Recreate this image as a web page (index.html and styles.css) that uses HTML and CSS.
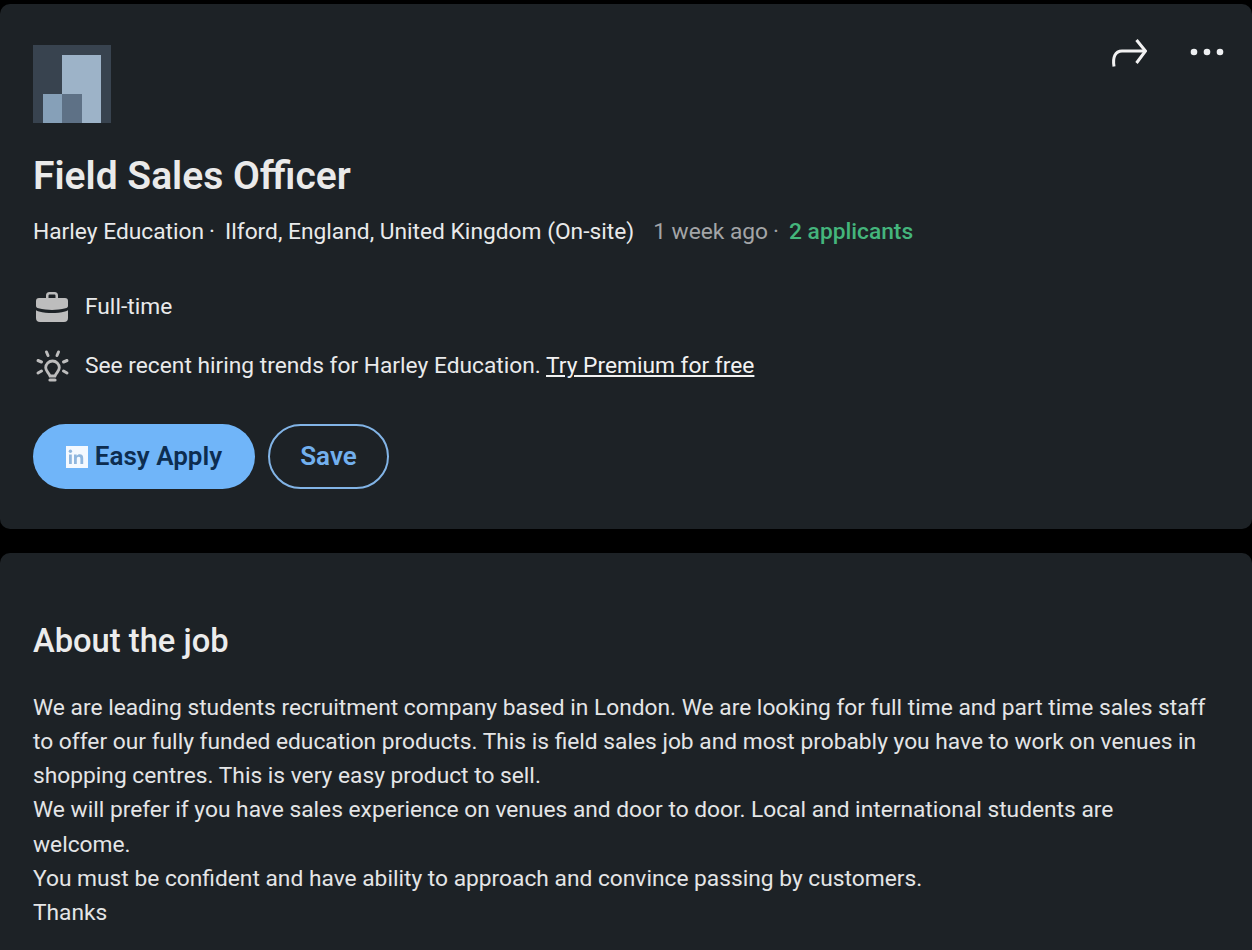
FILE: index.html
```html
<!DOCTYPE html>
<html lang="en">
<head>
<meta charset="utf-8">
<title>Field Sales Officer</title>
<link rel="stylesheet" href="styles.css">
</head>
<body>
<main class="page">
  <section class="card top-card">
    <div class="actions">
      <svg class="share" width="36" height="28" viewBox="0 0 36 28" fill="none" stroke="#f2f2f2" stroke-width="3"><path d="M3 27.500c-1.500-9 1-15.500 8-15.500h23"/><path d="M25.500 1l9 11-9 12"/></svg>
      <svg class="more" width="34" height="8" viewBox="0 0 34 8" fill="#eef0f2"><circle cx="4" cy="4" r="3.300"/><circle cx="17" cy="4" r="3.300"/><circle cx="30" cy="4" r="3.300"/></svg>
    </div>
    <svg class="logo" width="78" height="78" viewBox="0 0 78 78">
      <rect width="78" height="78" fill="#38434f"/>
      <rect x="29" y="10" width="39" height="68" fill="#9db3c8"/>
      <rect x="10" y="49" width="20" height="29" fill="#86a0b8"/>
      <rect x="29" y="49" width="20" height="29" fill="#5e7186"/>
    </svg>
    <h1 class="title">Field Sales Officer</h1>
    <p class="meta">
      <span>Harley Education</span><span class="sep">·</span><span class="loc">Ilford, England, United Kingdom (On-site)</span><span class="muted">1 week ago</span><span class="muted sep-b">·</span><span class="applicants">2 applicants</span>
    </p>
    <div class="insight first">
      <svg width="36" height="32" viewBox="0 0 36 32" fill="#bdbdbd"><path d="M12 7V4.500A3.500 3.500 0 0 1 15.500 1h5A3.500 3.500 0 0 1 24 4.500V7h-2.500V4.800c0-.8-.5-1.300-1.300-1.300h-4.400c-.8 0-1.300.5-1.300 1.300V7z"/><path d="M2 10a3 3 0 0 1 3-3h26a3 3 0 0 1 3 3v5c0 1.200-1 2-2.500 2.300C27 18.500 22 19 18 19s-9-.5-13.500-1.700C3 17 2 16.200 2 15z"/><path d="M2 19.300c1 .6 1.800 1 3 1.200C9 21.500 14 22 18 22s9-.5 13-1.500c1.200-.2 2-.6 3-1.200V27a4 4 0 0 1-4 4H6a4 4 0 0 1-4-4z"/></svg>
      <span>Full-time</span>
    </div>
    <div class="insight">
      <svg width="36" height="34" viewBox="0 0 36 34" fill="none" stroke="#bdbdbd" stroke-width="2.800" stroke-linecap="round"><path d="M18.500 12a6.800 6.800 0 0 0-6.800 6.800c0 3 2.800 4.700 4.300 8.200h5c1.500-3.500 4.300-5.200 4.300-8.200a6.800 6.800 0 0 0-6.800-6.800z"/><path d="M16 31h5" stroke-width="3.200"/><path d="M12.500 3l1.500 3.500M24.500 3L23 6.500M4 11.500l3.500 1.500M33 11.500L29.500 13M4 24l3.500-2M33 24l-3.500-2" stroke-width="3"/></svg>
      <span>See recent hiring trends for Harley Education. <a href="#" class="link">Try Premium for free</a></span>
    </div>
    <div class="buttons">
      <button class="btn primary"><svg class="in" width="22" height="22" viewBox="0 0 22 22"><rect width="22" height="22" fill="#f4f9ff"/><rect x="3" y="8.500" width="2.800" height="9.500" fill="#8fb6de"/><circle cx="4.400" cy="5.300" r="1.700" fill="#8fb6de"/><path d="M8 8.500h2.700v1.400c.6-1 1.700-1.700 3-1.700 2.500 0 3.500 1.500 3.500 4V18h-2.800v-5.200c0-1.300-.5-2.100-1.700-2.100s-1.900.9-1.900 2.200V18H8z" fill="#8fb6de"/></svg>Easy Apply</button>
      <button class="btn secondary">Save</button>
    </div>
  </section>
  <section class="card about">
    <h2 class="heading">About the job</h2>
    <div class="body-text">
      <p>We are leading students recruitment company based in London. We are looking for full time and part time sales staff to offer our fully funded education products. This is field sales job and most probably you have to work on venues in shopping centres. This is very easy product to sell.</p>
      <p>We will prefer if you have sales experience on venues and door to door. Local and international students are welcome.</p>
      <p>You must be confident and have ability to approach and convince passing by customers.</p>
      <p>Thanks</p>
    </div>
  </section>
</main>
</body>
</html>
```
FILE: styles.css
```css
* { box-sizing: border-box; }
html, body { margin: 0; padding: 0; height: 100%; overflow: hidden; background: #000; }
body { font-family: Roboto, "Liberation Sans", sans-serif; color: #e9eaeb; }
.page { display: flex; flex-direction: column; gap: 24px; padding-top: 4px; }
.card { background: #1d2226; border-radius: 10px; padding: 0 44px 0 33px; position: relative; }
.top-card { height: 525px; padding-top: 41px; }
.about { height: 420px; padding-top: 68px; }
.actions { position: absolute; top: 35px; right: 28px; display: flex; align-items: center; gap: 43px; }
.share { display: block; }
.more { display: block; margin-top: -2px; }
.logo { display: block; }
.title { margin: 29px 0 0; font-size: 39px; line-height: 48px; font-weight: 600; color: #eaeaea; }
.meta { margin: 15px 0 0; font-size: 22.750px; line-height: 34px; display: flex; white-space: nowrap; }
.sep { margin: 0 10px 0 5px; }
.muted { color: #a3a5a7; }
.sep-b { margin: 0 10px 0 5px; }
.loc { margin-right: 19px; }
.applicants { color: #44b57c; font-weight: 500; }
.insight { display: flex; align-items: center; gap: 15px; margin-top: 25px; margin-left: 1px; font-size: 22.750px; line-height: 34px; height: 34px; }
.insight.first { margin-top: 41px; }
.link { color: #f2f2f2; text-decoration: underline; }
.buttons { display: flex; gap: 13px; margin-top: 41px; }
.btn { font-family: inherit; font-size: 26px; font-weight: 600; height: 65px; border-radius: 33px; display: flex; align-items: center; justify-content: center; padding: 0 0 2px; cursor: pointer; }
.primary { width: 222px; background: #70b5f9; border: 0; color: #0d2d50; gap: 7px; }
.secondary { width: 121px; background: transparent; border: 2px solid #82b4e6; color: #72b0ee; }
.in { display: block; margin-top: 2px; }
.heading { margin: 0; font-size: 32.700px; line-height: 40px; font-weight: 500; color: #ececec; }
.body-text { margin-top: 30px; font-size: 22.750px; line-height: 34.150px; color: #e4e5e6; }
.body-text p { margin: 0; }
```
